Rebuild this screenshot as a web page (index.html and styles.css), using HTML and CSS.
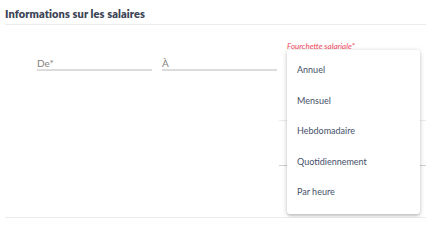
FILE: index.html
```
<!DOCTYPE html>
<html lang="fr">
<head>
<meta charset="utf-8">
<link rel="stylesheet" href="styles.css">
</head>
<body>
<section class="salary">
  <h2 class="title">Informations sur les salaires</h2>
  <div class="fields">
    <div class="field field-from"><span class="label">De*</span></div>
    <div class="field field-to"><span class="label">À</span></div>
    <div class="range">
      <span class="range-label">Fourchette salariale*</span>
      <div class="range-line range-line-light"></div>
      <div class="range-line range-line-dark"></div>
      <ul class="menu">
        <li>Annuel</li>
        <li>Mensuel</li>
        <li>Hebdomadaire</li>
        <li>Quotidiennement</li>
        <li>Par heure</li>
      </ul>
    </div>
  </div>
  <div class="bottom-rule"></div>
</section>
</body>
</html>
```
FILE: styles.css
```
html, body {
  margin: 0;
  padding: 0;
  background: #ffffff;
  font-family: Lato, "Open Sans", sans-serif;
}
.salary {
  width: 426px;
  height: 218px;
  padding-left: 5px;
  box-sizing: border-box;
  display: flex;
  flex-direction: column;
  overflow: hidden;
}
.title {
  margin: 0;
  padding-top: 7px;
  height: 17px;
  font-size: 11px;
  font-weight: 800;
  color: #3c4456;
  border-bottom: 1px solid #ececec;
  letter-spacing: 0.1px;
}
.fields {
  display: grid;
  grid-template-columns: 115px 115px 139px;
  column-gap: 10px;
  padding-left: 32px;
  height: 192px;
  box-sizing: border-box;
}
.field {
  margin-top: 31px;
  height: 13px;
  border-bottom: 2px solid #dcdcdc;
  display: flex;
  align-items: flex-end;
}
.label {
  font-size: 10px;
  color: #857f7a;
  line-height: 12px;
}
.range {
  position: relative;
  padding-top: 16px;
}
.range-label {
  display: block;
  font-size: 8px;
  font-style: italic;
  color: #f04a5c;
  line-height: 10px;
  margin-left: 0;
}
.range-line {
  margin-left: -8px;
  margin-right: -10px;
}
.range-line-light {
  margin-top: 69px;
  border-top: 1px solid #ececec;
}
.range-line-dark {
  margin-top: 44px;
  border-top: 1px solid #cfcfcf;
}
.menu {
  position: absolute;
  left: 0;
  top: 25px;
  width: 133px;
  margin: 0;
  padding: 5px 0 6px;
  list-style: none;
  background: #ffffff;
  border-radius: 3px;
  box-shadow: 0 1px 5px rgba(0, 0, 0, 0.22), 0 2px 2px rgba(0, 0, 0, 0.1);
}
.menu li {
  height: 30.6px;
  line-height: 30.6px;
  padding-left: 10px;
  font-size: 9px;
  color: #46506a;
}
.bottom-rule {
  border-top: 1px solid #ececec;
}
```
